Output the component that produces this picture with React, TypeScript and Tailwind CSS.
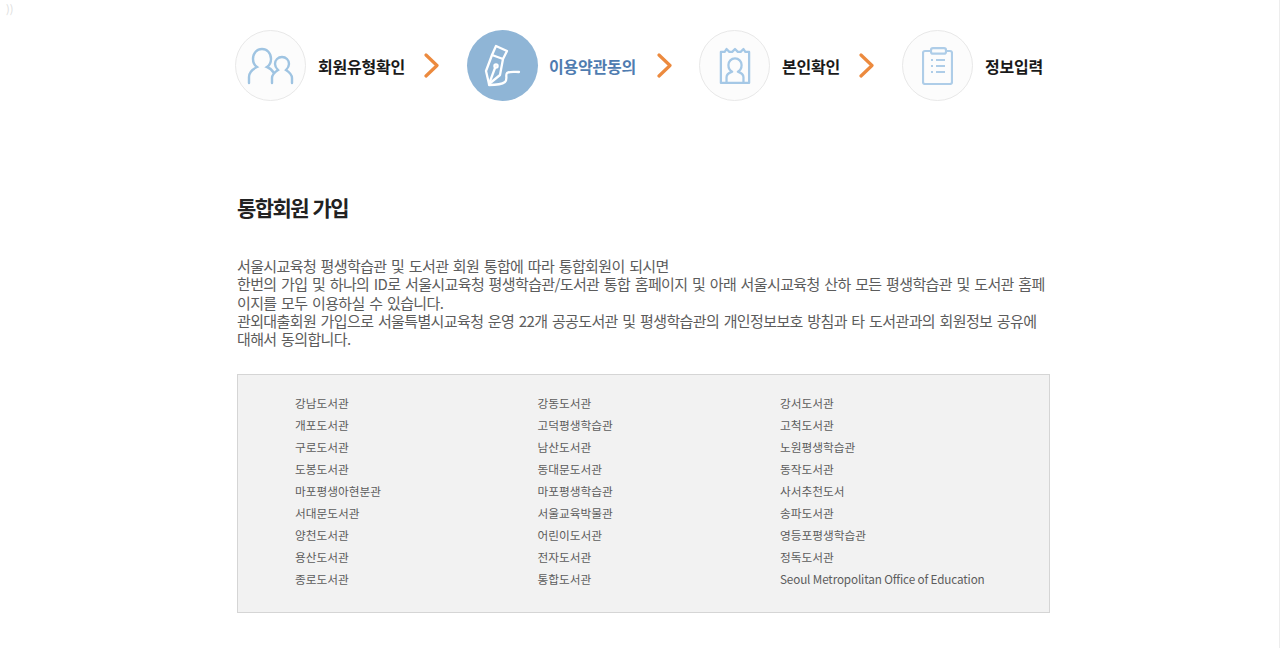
const font = "font-['Noto_Sans_CJK_KR','Noto_Sans',sans-serif]";

const PeopleIcon = () => (
  <svg width="48" height="38" viewBox="0 0 48 38" fill="none" stroke="#9fc4e2" strokeWidth="2.4" strokeLinecap="round">
    <path d="M2 36v-6c0-5 4-8 8-10-3-2-4-5-4-8 0-6 4-10 9-10s9 4 9 10c0 3-1 6-4 8 3 1 5 3 7 6" />
    <path d="M25 36v-5c0-4 3-6 6-8-2-2-3-4-3-6 0-4 3-7 7-7s7 3 7 7c0 2-1 4-3 6 3 2 6 4 6 8v5" />
  </svg>
);
const PenIcon = () => (
  <svg width="38" height="44" viewBox="0 0 38 44" fill="none" stroke="#ffffff" strokeWidth="2.3" strokeLinecap="round" strokeLinejoin="round">
    <path d="M12 2l11 5-4 8-11-4z" />
    <path d="M8 11L2 27l3 13 11-9 3-16" />
    <path d="M5 40l6-16" />
    <circle cx="12" cy="22" r="1.6" />
    <path d="M5 41c5 0 12 0 16-3 3-3 0-7 2-9 3-2 8-1 12-1" />
  </svg>
);
const IdIcon = () => (
  <svg width="32" height="38" viewBox="0 0 34 40" fill="none" stroke="#a5c8e6" strokeWidth="2.4" strokeLinejoin="round">
    <path d="M2 5h4l2-3 3 3h3l3-3 3 3h3l3-3 2 3h4v33H2z" />
    <path d="M8 38v-6c0-3 3-5 6-6-2-1-4-4-4-7 0-4 3-7 7-7s7 3 7 7c0 3-2 6-4 7 3 1 6 3 6 6v6" />
  </svg>
);
const ClipboardIcon = () => (
  <svg width="31" height="38" viewBox="0 0 31 38" fill="none" stroke="#aecde8" strokeWidth="2.2" strokeLinejoin="round">
    <path d="M9 4H3a2 2 0 0 0-2 2v29a2 2 0 0 0 2 2h25a2 2 0 0 0 2-2V6a2 2 0 0 0-2-2h-4" />
    <rect x="9" y="1.2" width="15" height="5.5" rx="2" />
    <path d="M14 13h9M14 19h9M14 25h9" />
    <path d="M9 13h2M9 19h2M9 25h2" />
  </svg>
);
const Chevron = () => (
  <svg width="15" height="25" viewBox="0 0 15 25" fill="none" stroke="#ec8a3e" strokeWidth="3.2" strokeLinecap="round" strokeLinejoin="round">
    <path d="M2 2l11 10.5L2 23" />
  </svg>
);

const Circle = ({ active, children }: { active?: boolean; children: React.ReactNode }) => (
  <div className={`flex h-[71px] w-[71px] shrink-0 items-center justify-center rounded-full ${active ? "bg-[#8fb5d6]" : "border border-[#e8e8e8] bg-[#fcfcfc]"}`}>
    {children}
  </div>
);

const rows = [
  ["강남도서관", "강동도서관", "강서도서관"],
  ["개포도서관", "고덕평생학습관", "고척도서관"],
  ["구로도서관", "남산도서관", "노원평생학습관"],
  ["도봉도서관", "동대문도서관", "동작도서관"],
  ["마포평생아현분관", "마포평생학습관", "사서추천도서"],
  ["서대문도서관", "서울교육박물관", "송파도서관"],
  ["양천도서관", "어린이도서관", "영등포평생학습관"],
  ["용산도서관", "전자도서관", "정독도서관"],
  ["종로도서관", "통합도서관", "Seoul Metropolitan Office of Education"],
];

export default function App() {
  return (
    <div className={`relative h-[648px] w-full overflow-hidden bg-white ${font}`}>
      <span className="absolute left-[6px] top-0 text-[11px] leading-[16px] text-[#dddddd]">))</span>
      <div className="absolute right-0 top-0 h-full w-px bg-[#ededed]" />
      <div className="ml-[235px] w-[815px] pt-[30px]">
        <div className="flex h-[71px] items-center">
          <Circle><PeopleIcon /></Circle>
          <span className="ml-[12px] w-[106px] text-[16px] font-bold tracking-[-0.2px] text-[#1a1a1a]">회원유형확인</span>
          <Chevron />
          <div className="ml-[28px]"><Circle active><PenIcon /></Circle></div>
          <span className="ml-[11px] w-[108px] text-[16px] font-bold tracking-[-0.2px] text-[#4f7cb0]">이용약관동의</span>
          <Chevron />
          <div className="ml-[27px]"><Circle><IdIcon /></Circle></div>
          <span className="ml-[12px] w-[77px] text-[16px] font-bold tracking-[-0.2px] text-[#1a1a1a]">본인확인</span>
          <Chevron />
          <div className="ml-[28px]"><Circle><ClipboardIcon /></Circle></div>
          <span className="ml-[12px] text-[16px] font-bold tracking-[-0.2px] text-[#1a1a1a]">정보입력</span>
        </div>
        <div className="ml-[2px] w-[813px]">
          <h1 className="mt-[91px] text-[21px] leading-[30px] font-bold tracking-[-1.6px] [word-spacing:1.5px] text-[#222222]">통합회원 가입</h1>
          <p className="mt-[35px] text-[15px] leading-[18.3px] tracking-[-0.62px] [word-spacing:1.8px] text-[#5c5c5c]">
            서울시교육청 평생학습관 및 도서관 회원 통합에 따라 통합회원이 되시면<br />
            한번의 가입 및 하나의 ID로 서울시교육청 평생학습관/도서관 통합 홈페이지 및 아래 서울시교육청 산하 모든 평생학습관 및 도서관 홈페이지를 모두 이용하실 수 있습니다.<br />
            관외대출회원 가입으로 서울특별시교육청 운영 22개 공공도서관 및 평생학습관의 개인정보보호 방침과 타 도서관과의 회원정보 공유에 대해서 동의합니다.
          </p>
          <div className="mt-[26px] h-[239px] border border-[#d5d5d5] bg-[#f2f2f2] pl-[57px] pt-[16px]">
            {rows.map((r) => (
              <div key={r[0]} className="grid h-[22px] grid-cols-[242.5px_242.5px_1fr] items-center text-[11.7px] text-[#5c5c5c]">
                {r.map((c) => <span key={c} className={c.startsWith("Seoul") ? "tracking-[-0.13px]" : ""}>{c}</span>)}
              </div>
            ))}
          </div>
        </div>
      </div>
    </div>
  );
}
